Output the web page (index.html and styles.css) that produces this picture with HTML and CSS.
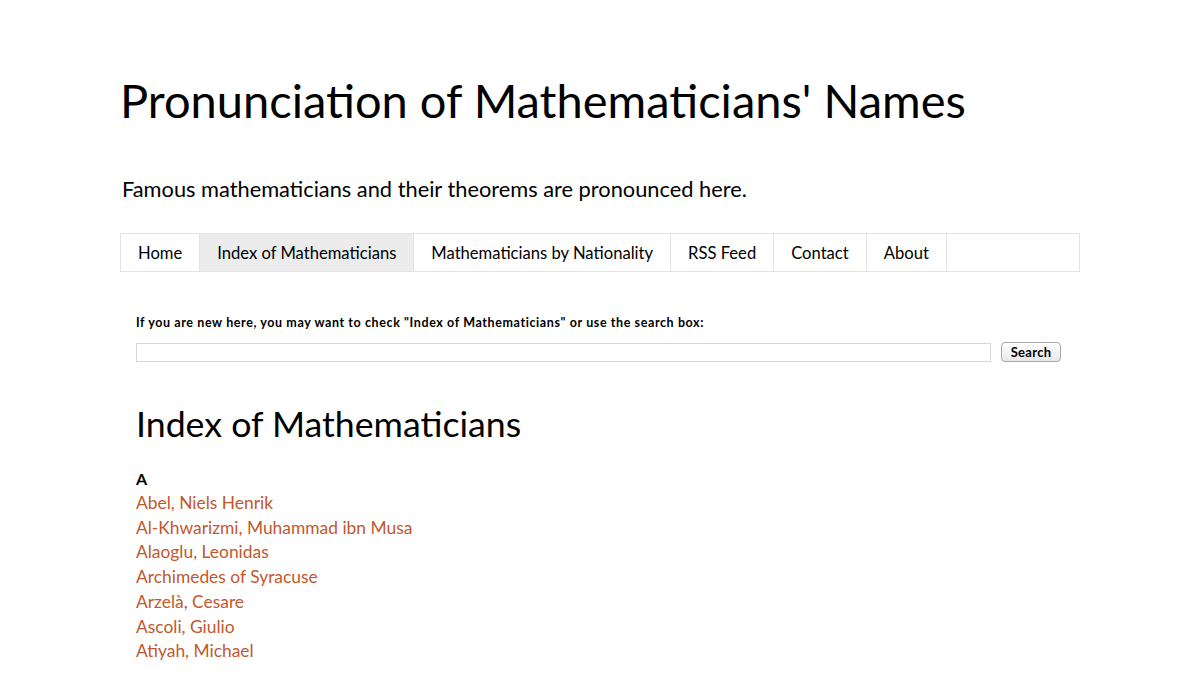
FILE: index.html
```html
<!DOCTYPE html>
<html lang="en">
<head>
<meta charset="utf-8">
<title>Pronunciation of Mathematicians' Names</title>
<link rel="stylesheet" href="styles.css">
</head>
<body>
<div class="page">
  <header class="header">
    <h1 class="site-title">Pronunciation of Mathematicians' Names</h1>
    <p class="site-desc">Famous mathematicians and their theorems are pronounced here.</p>
  </header>
  <nav class="nav">
    <a class="nav-item" href="#">Home</a>
    <a class="nav-item active" href="#">Index of Mathematicians</a>
    <a class="nav-item" href="#">Mathematicians by Nationality</a>
    <a class="nav-item" href="#">RSS Feed</a>
    <a class="nav-item" href="#">Contact</a>
    <a class="nav-item" href="#">About</a>
  </nav>
  <main class="content">
    <p class="search-intro">If you are new here, you may want to check "Index of Mathematicians" or use the search box:</p>
    <form class="search">
      <input class="search-input" type="text">
      <button class="search-btn" type="button">Search</button>
    </form>
    <h2 class="index-title">Index of Mathematicians</h2>
    <div class="letter">A</div>
    <ul class="names">
      <li><a href="#">Abel, Niels Henrik</a></li>
      <li><a href="#">Al-Khwarizmi, Muhammad ibn Musa</a></li>
      <li><a href="#">Alaoglu, Leonidas</a></li>
      <li><a href="#">Archimedes of Syracuse</a></li>
      <li><a href="#">Arzelà, Cesare</a></li>
      <li><a href="#">Ascoli, Giulio</a></li>
      <li><a href="#">Atiyah, Michael</a></li>
    </ul>
  </main>
</div>
</body>
</html>
```

FILE: styles.css
```css
html, body {
  margin: 0;
  padding: 0;
  background: #fff;
}
body {
  font-family: "Lato", "DejaVu Sans", sans-serif;
  color: #000;
}
.page {
  width: 960px;
  margin: 0 auto;
  padding-top: 72px;
}
.site-title {
  margin: 0;
  font-size: 47px;
  font-weight: normal;
  line-height: 56px;
}
.site-desc {
  margin: 49px 0 0 2px;
  font-size: 21.8px;
  line-height: 24px;
}
.nav {
  display: flex;
  margin-top: 32px;
  border: 1px solid #e3e3e3;
  height: 37px;
}
.nav-item {
  display: flex;
  align-items: center;
  padding: 0 17px;
  border-right: 1px solid #e3e3e3;
  color: #000;
  text-decoration: none;
  font-size: 16.6px;
}
.nav-item.active {
  background: #ececec;
}
.content {
  padding: 0 16px;
}
.search-intro {
  margin: 44px 0 0;
  font-size: 12.5px;
  letter-spacing: 0.6px;
  font-weight: bold;
  line-height: 14px;
}
.search {
  display: flex;
  align-items: center;
  margin-top: 12px;
  gap: 10px;
}
.search-input {
  flex: 1;
  height: 19px;
  box-sizing: border-box;
  border: 1px solid #d8d8d8;
  margin: 0;
}
.search-btn {
  width: 60px;
  height: 20px;
  font-family: inherit;
  font-size: 13px;
  font-weight: bold;
  letter-spacing: 0.3px;
  border: 1px solid #a8a8a8;
  border-radius: 4px;
  background: linear-gradient(#fff, #e8e8e8);
  padding: 0;
  margin-right: 3px;
}
.index-title {
  margin: 40px 0 0;
  font-size: 35.7px;
  font-weight: normal;
  line-height: 44px;
}
.letter {
  margin-top: 22px;
  font-weight: bold;
  font-size: 16px;
  line-height: 22px;
}
.names {
  list-style: none;
  margin: 1px 0 0;
  padding: 0;
}
.names li {
  font-size: 17.4px;
  line-height: 24.7px;
}
.names a {
  color: #c0592e;
  text-decoration: none;
}
```
